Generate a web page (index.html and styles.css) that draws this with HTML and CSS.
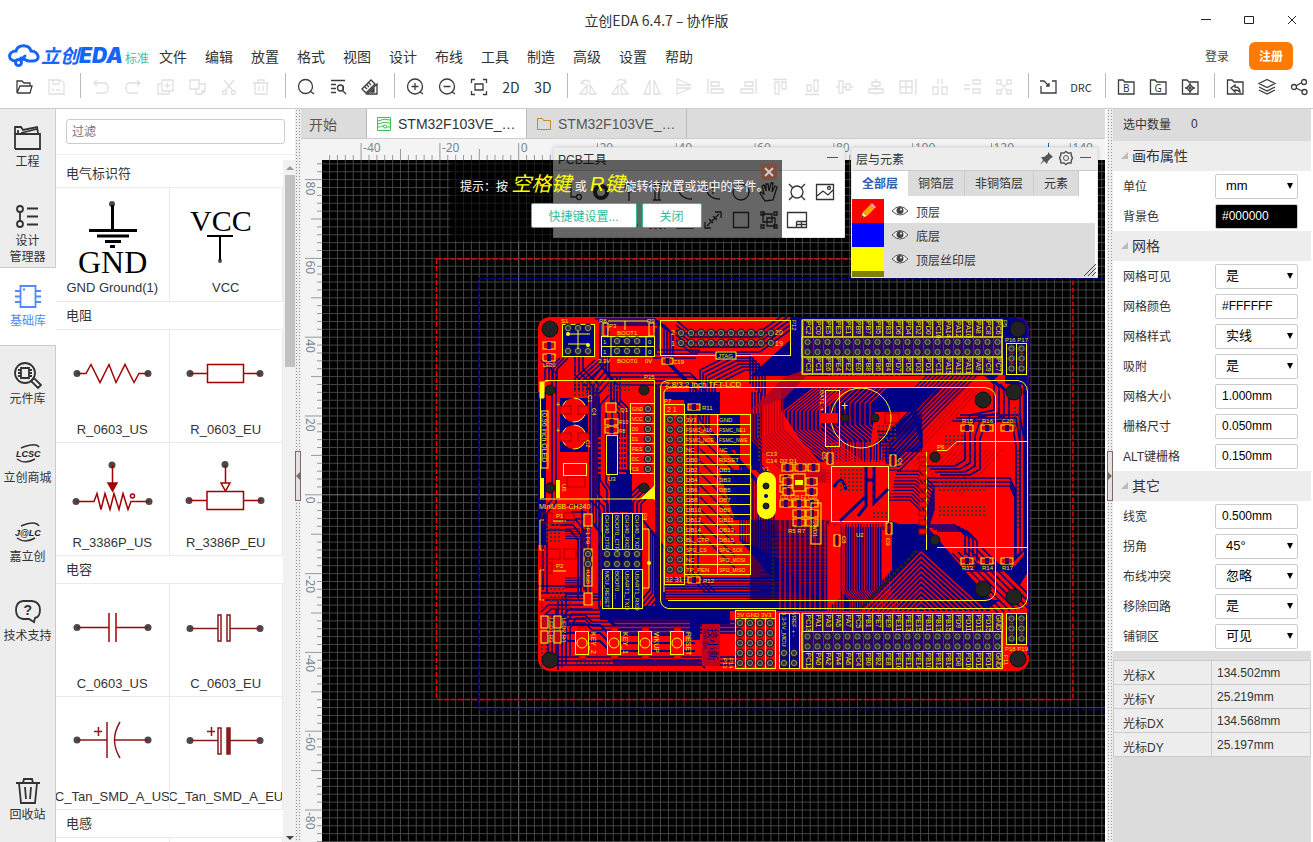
FILE: index.html
```html
<!DOCTYPE html>
<html lang="zh-CN">
<head>
<meta charset="utf-8">
<title>立创EDA 6.4.7 – 协作版</title>
<link rel="stylesheet" href="styles.css">
</head>
<body>
<div class="app">
<header class="titlebar">
  <h1 class="title">立创EDA 6.4.7 – 协作版</h1>
  <div class="window-buttons">
    <button aria-label="最小化"><svg width="14" height="14"><path d="M2 6.500h10" stroke-width="1"/></svg></button>
    <button aria-label="最大化"><svg width="14" height="14"><path d="M2.500 3.500h9v7h-9z" stroke-width="1"/></svg></button>
    <button aria-label="关闭"><svg width="14" height="14"><path d="M3 3l8 8M11 3l-8 8" stroke-width="1"/></svg></button>
  </div>
</header>
<div class="menubar">
  <a class="brand" href="#" aria-label="立创EDA">
    <svg width="32" height="24" viewBox="0 0 32 24" fill="none" stroke="#1765f6" stroke-width="3" stroke-linecap="round"><path d="M8 17C-1 17 0 7 8 7C10 0 21 0 23 7C31 7 33 17 25 17H20L13 14"/><circle cx="10.500" cy="18.500" r="3"/><path d="M13 16l4-4"/></svg>
    <span class="brand-name">立创<b>EDA</b></span>
  </a>
  <span class="edition">标准</span>
  <nav class="menu">
    <a href="#">文件</a><a href="#">编辑</a><a href="#">放置</a><a href="#">格式</a><a href="#">视图</a><a href="#">设计</a><a href="#">布线</a><a href="#">工具</a><a href="#">制造</a><a href="#">高级</a><a href="#">设置</a><a href="#">帮助</a>
  </nav>
  <a class="login" href="#">登录</a>
  <button class="register">注册</button>
</div>
<div class="toolbar">
  <button aria-label="打开"><svg viewBox="0 0 20 20"><path d="M3 16V4h5l2 2h6v3M3 16l3-7h12l-2 7H3"/></svg></button>
  <button aria-label="保存" disabled><svg viewBox="0 0 20 20"><path d="M3 3h11l4 3v11H3zM7 3v4h6V3M6 13h2M10 13h4"/></svg></button>
  <i class="sep"></i>
  <button aria-label="撤销" disabled><svg viewBox="0 0 20 20"><path d="M6 3L3 6l3 3M3 6h10q4 0 4 5t-4 5H5"/></svg></button>
  <button aria-label="重做" disabled><svg viewBox="0 0 20 20"><path d="M14 3l3 3-3 3M17 6H7q-4 0-4 5t4 5h8"/></svg></button>
  <button aria-label="添加" disabled><svg viewBox="0 0 20 20"><path d="M7 3h11v11H7zM7 7H3v10h11v-3M12.500 5.500v6M9.500 8.500h6"/></svg></button>
  <button aria-label="复制" disabled><svg viewBox="0 0 20 20"><path d="M3 3h9v9H3zM12 7h6v7l-3 3H9v-5M15 17v-3h3"/></svg></button>
  <button aria-label="剪切" disabled><svg viewBox="0 0 20 20"><path d="M5 3l9 11M15 3L6 14"/><circle cx="5.500" cy="15.500" r="2"/><circle cx="14.500" cy="15.500" r="2"/></svg></button>
  <button aria-label="删除" disabled><svg viewBox="0 0 20 20"><path d="M2 6h16M7 6V3h6v3M4 6v11h12V6M8 9v5M12 9v5"/></svg></button>
  <i class="sep"></i>
  <button aria-label="查找"><svg viewBox="0 0 20 20"><circle cx="9.500" cy="9.500" r="7"/><path d="M14 14l4 3"/></svg></button>
  <button aria-label="查找相似"><svg viewBox="0 0 20 20"><path d="M3 3.500h14M3 7.500h5M3 11.500h5M3 15.500h5"/><circle cx="12.500" cy="11" r="3"/><path d="M14 13l4 4M15 9v4"/></svg></button>
  <button aria-label="测量"><svg viewBox="0 0 20 20"><path d="M2 12l9-9 4 4-9 9zM5 10l2 2M7 8l2 2M9 6l2 2M17 7v10H7zM14 12v3h-3z"/></svg></button>
  <i class="sep"></i>
  <button aria-label="放大"><svg viewBox="0 0 20 20"><circle cx="10" cy="9.500" r="7.500"/><path d="M10 6v7M6.500 9.500h7M15 15l3 2"/></svg></button>
  <button aria-label="缩小"><svg viewBox="0 0 20 20"><circle cx="10" cy="9.500" r="7.500"/><path d="M6.500 9.500h7M15 15l3 2"/></svg></button>
  <button aria-label="适合窗口"><svg viewBox="0 0 20 20"><path d="M2.500 6V2.500H6M14 2.500h3.500V6M17.500 14v3.500H14M6 17.500H2.500V14M6 7h8v6H6z"/></svg></button>
  <button class="word">2D</button>
  <button class="word">3D</button>
  <i class="sep"></i>
  <button aria-label="左旋" disabled><svg viewBox="0 0 20 20"><path d="M9 8v9H2zM12 8v9h6zM5 3L3 6l4 1M3 6q4-5 9-1"/></svg></button>
  <button aria-label="右旋" disabled><svg viewBox="0 0 20 20"><path d="M8 8v9H2zM11 8v9h7zM15 2l1 4-4 1M16 6Q12 0 7 4"/></svg></button>
  <button aria-label="水平翻转" disabled><svg viewBox="0 0 20 20"><path d="M8 3v14H2zM12 3v14h6z"/></svg></button>
  <button aria-label="垂直翻转" disabled><svg viewBox="0 0 20 20"><path d="M3 8h14L3 2zM3 11h14L3 17z"/></svg></button>
  <button aria-label="左对齐" disabled><svg viewBox="0 0 20 20"><path d="M2 2v15M5 5h8v4H5zM5 12h12v4H5z"/></svg></button>
  <button aria-label="右对齐" disabled><svg viewBox="0 0 20 20"><path d="M18 2v15M7 5h8v4H7zM3 12h12v4H3z"/></svg></button>
  <button aria-label="顶对齐" disabled><svg viewBox="0 0 20 20"><path d="M3 2.500h14M5 5h4v12H5zM12 5h4v7h-4z"/></svg></button>
  <button aria-label="底对齐" disabled><svg viewBox="0 0 20 20"><path d="M3 17.500h14M5 8h4v6H5zM12 3h4v11h-4z"/></svg></button>
  <button aria-label="水平居中" disabled><svg viewBox="0 0 20 20"><path d="M2 10h3M9 10h3M16 10h3M5 4h4v12H5zM12 7h4v6h-4z"/></svg></button>
  <button aria-label="垂直居中" disabled><svg viewBox="0 0 20 20"><path d="M10 2v3M10 9v3M10 16v2M6 5h8v4H6zM3 12h14v4H3z"/></svg></button>
  <button aria-label="栅格对齐" disabled><svg viewBox="0 0 20 20"><path d="M2 4h12v12H2zM2 10h12M8 4v12M18 2v16"/></svg></button>
  <button aria-label="水平分布" disabled><svg viewBox="0 0 20 20"><path d="M8 2v5M12 2v5M3 10h5v7H3zM12 10h5v7h-5z"/></svg></button>
  <button aria-label="垂直分布" disabled><svg viewBox="0 0 20 20"><path d="M2 8h6M2 12h6M11 3h7v4h-7zM11 12h7v4h-7z"/></svg></button>
  <button aria-label="阵列" disabled><svg viewBox="0 0 20 20"><path d="M3 3h4v4H3zM13 3h4v4h-4zM3 13h4v4H3zM13 13h4v4h-4zM7 7l6 6M13 7l-6 6"/></svg></button>
  <i class="sep"></i>
  <button aria-label="导入变更"><svg viewBox="0 0 20 20"><path d="M2 9v7h15V4h-4M1 4h4l5 5M10 6v3H7"/></svg></button>
  <button class="word small">DRC</button>
  <i class="sep"></i>
  <button aria-label="BOM"><svg viewBox="0 0 20 20"><path d="M2.500 17V3H7l2 2h9v12z"/><text x="7" y="14.500">B</text></svg></button>
  <button aria-label="Gerber"><svg viewBox="0 0 20 20"><path d="M2.500 17V3H7l2 2h9v12z"/><text x="6.500" y="14.500">G</text></svg></button>
  <button aria-label="坐标文件"><svg viewBox="0 0 20 20"><path d="M2.500 17V3H7l2 2h9v12zM10 6v2M10 14v2M5 11h2M13 11h2"/><path d="M10 7.500l3.500 3.500-3.500 3.500L6.500 11z"/><circle cx="10" cy="11" r="1"/></svg></button>
  <i class="sep"></i>
  <button aria-label="回退"><svg viewBox="0 0 20 20"><path d="M2.500 17V3H7l2 2h9v12zM6 11l4-3v2q5 0 5 5-2-2-5-2v2z"/></svg></button>
  <button aria-label="图层"><svg viewBox="0 0 20 20"><path d="M10 2.500l8 4-8 4-8-4zM2 10l8 4 8-4M2 13l8 4 8-4"/></svg></button>
  <button aria-label="分享"><svg viewBox="0 0 20 20"><circle cx="5" cy="10" r="2.500"/><circle cx="15" cy="5" r="2.500"/><circle cx="15.500" cy="15" r="2.500"/><path d="M7 9l5-3M7 11l6 3"/></svg></button>
</div>

<main class="workspace">
<nav class="rail">
  <button><svg width="30" height="30" viewBox="0 0 30 30"><path d="M2 26V4h6l2 3 14-3 1 6M2 11h25v15H2M5 11V7M8 10l16-4"/></svg>工程</button>
  <button class="two"><svg width="30" height="30" viewBox="0 0 30 30"><circle cx="7" cy="7" r="3"/><circle cx="7" cy="22" r="3"/><path d="M7 10v9M14 6.500h11M14 14.500h11M14 22.500h11"/></svg><span>设计<br>管理器</span></button>
  <button class="active"><svg width="30" height="30" viewBox="0 0 30 30"><path d="M7.500 4h15v21h-15zM2 9h5M2 14.500h5M2 20h5M23 9h5M23 14.500h5M23 20h5M10 7.500h2"/></svg>基础库</button>
  <button><svg width="30" height="30" viewBox="0 0 30 30"><circle cx="12" cy="13" r="10"/><path d="M19 20l2-2 7 7-3 3-7-7zM8 8h8v10H8zM5 10h3M5 13h3M5 16h3M16 10h3M16 13h3M16 16h3"/></svg>元件库</button>
  <button><svg width="30" height="30" viewBox="0 0 30 30"><path class="swoosh" d="M8 9Q23 3 26 8M4 20Q12 26 22 20"/><text x="3" y="18" class="mark">LCSC</text></svg>立创商城</button>
  <button><svg width="30" height="30" viewBox="0 0 30 30"><path class="swoosh" d="M8 8Q22 2 26 8M4 20Q12 26 22 20"/><text x="2" y="18" class="mark">J@LC</text></svg>嘉立创</button>
  <button><svg width="30" height="30" viewBox="0 0 30 30"><path d="M10 4h9q8 1 8 9 0 7-5 8l-1 4-5-3h-6q-7-1-7-9 0-8 7-9z"/><text x="10.500" y="18" class="ask">?</text></svg>技术支持</button>
  <button class="last"><svg width="30" height="30" viewBox="0 0 30 30"><path d="M3 7h24M10 7l1-4h8l1 4M6 7l2 20h14l2-20M12 11l1 12M18 11l-1 12"/></svg>回收站</button>
</nav>
<section class="library">
  <div class="filter"><input type="text" placeholder="过滤" aria-label="过滤"></div>
  <div class="library-body">
  <div class="parts">
    <h2>电气标识符</h2>
    <div class="cells first">
      <figure><svg viewBox="0 0 113 90"><circle class="pin" cx="56" cy="16" r="3"/><path d="M56.500 17V42" stroke="#000" stroke-width="3"/><path d="M33 42.500h48M41 48h32M49 53.500h16M54 58.500h5" stroke="#000" stroke-width="3"/><text x="22" y="85" class="serif32">GND</text></svg><figcaption>GND Ground(1)</figcaption></figure>
      <figure><svg viewBox="0 0 113 90"><circle class="pin" cx="51" cy="73" r="2"/><path d="M38 48h26M51 48v24" stroke="#000" stroke-width="2"/><text x="21" y="43" class="serif30">VCC</text></svg><figcaption>VCC</figcaption></figure>
    </div>
    <h2>电阻</h2>
    <div class="cells">
      <figure><svg viewBox="0 0 113 90"><g class="pin"><circle cx="21" cy="43.500" r="3.500"/><circle cx="92" cy="43.500" r="3.500"/></g><path d="M21 43.500h9l5-9 9 18 9-18 7 18 9-18 9 18 5-9h9"/></svg><figcaption>R_0603_US</figcaption></figure>
      <figure><svg viewBox="0 0 113 90"><g class="pin"><circle cx="21" cy="43.500" r="3.500"/><circle cx="91" cy="43.500" r="3.500"/></g><path d="M21 43.500h17M38.500 34.500h36v18h-36zM74 43.500h17"/></svg><figcaption>R_0603_EU</figcaption></figure>
      <figure><svg viewBox="0 0 113 90"><g class="pin"><circle cx="20" cy="58.500" r="3.500"/><circle cx="93" cy="58.500" r="3.500"/><circle cx="56" cy="22" r="3.500"/></g><path d="M20 58.500h18l3-8 4 16 4-16 5 16 4-16 5 16 4-16 5 16 3-8h18M56.500 22v20"/><path d="M52 40h9l-4.500 8z" fill="#a00000"/><circle cx="76.500" cy="53" r="2" fill="none"/></svg><figcaption>R_3386P_US</figcaption></figure>
      <figure><svg viewBox="0 0 113 90"><g class="pin"><circle cx="20" cy="57.500" r="3.500"/><circle cx="92" cy="57.500" r="3.500"/><circle cx="56" cy="21.500" r="3.500"/></g><path d="M20 57.500h18M38 48.500h36.500v18H38zM74 57.500h18M56.500 22v18M52 40h9l-4.500 8z"/></svg><figcaption>R_3386P_EU</figcaption></figure>
    </div>
    <h2>电容</h2>
    <div class="cells">
      <figure><svg viewBox="0 0 113 90"><g class="pin"><circle cx="21" cy="43.500" r="3.500"/><circle cx="92" cy="43.500" r="3.500"/></g><path d="M21 43.500h32M53 29v29M60 29v29M60 43.500h32"/></svg><figcaption>C_0603_US</figcaption></figure>
      <figure><svg viewBox="0 0 113 90"><g class="pin"><circle cx="21" cy="44.500" r="3.500"/><circle cx="91" cy="44.500" r="3.500"/></g><path class="dull" d="M21 44.500h28M49 31h3v26h-3zM58 31h3v26h-3zM61 44.500h30"/></svg><figcaption>C_0603_EU</figcaption></figure>
      <figure><svg viewBox="0 0 113 90"><g class="pin"><circle cx="21" cy="43" r="3.500"/><circle cx="92" cy="43" r="3.500"/></g><path class="dull" d="M21 43h30M51 25v36M64 25q-11 18 0 36M58 43h34M38 34.500h8M42.500 30v9"/></svg><figcaption>C_Tan_SMD_A_US</figcaption></figure>
      <figure><svg viewBox="0 0 113 90"><g class="pin"><circle cx="21" cy="43.500" r="3.500"/><circle cx="91" cy="43.500" r="3.500"/></g><path class="dull" d="M21 43.500h28M49 31h3v26h-3zM61 43.500h30M38 34.500h8M42.500 30v9"/><path d="M58 31h3v26h-3z" class="dull" fill="#8b1a1a"/></svg><figcaption>C_Tan_SMD_A_EU</figcaption></figure>
    </div>
    <h2>电感</h2>
    <div class="cells"><figure></figure><figure></figure></div>
  </div>
  <div class="scrollbar"><span class="up"></span><span class="thumb"></span><span class="down"></span></div>
  </div>
</section>
<div class="splitter left"><button aria-label="折叠左侧面板"></button></div>

<section class="editor">
  <div class="tabs">
    <button class="tab start">开始</button>
    <button class="tab current"><svg width="16" height="16" viewBox="0 0 16 16" stroke="#3bc44b"><path d="M1.500 1.500h13v13h-13zM2 5q6-3 12-1M2 8q6-3 12-1M2 11q3 0 4-1h2M10 11h4"/><circle cx="9" cy="10.500" r="1.500"/></svg>STM32F103VE_…</button>
    <button class="tab"><svg width="16" height="16" viewBox="0 0 16 16" stroke="#c28a20"><path d="M1.500 13.500v-11h5l1 2h7v9z"/></svg>STM32F103VE_…</button>
  </div>
  <div class="canvas"><svg id="board" aria-label="PCB 画布"></svg></div>

  <section class="panel tools">
    <header><span>PCB工具</span><button class="min" aria-label="最小化"></button></header>
    <div class="tool-grid">
      <button aria-label="导线"><svg viewBox="0 0 24 24"><path d="M3 3h7v14h5"/><circle cx="18" cy="17" r="2.500"/></svg></button>
      <button aria-label="焊盘"><svg viewBox="0 0 24 24"><circle cx="12" cy="12" r="6" stroke-width="4"/></svg></button>
      <button aria-label="过孔"><svg viewBox="0 0 24 24"><circle cx="12" cy="8" r="4"/><path d="M12 12v9"/></svg></button>
      <button aria-label="文字"><svg viewBox="0 0 24 24"><path d="M5 7V4h14v3M10 4v16h4V4M8 20h8"/></svg></button>
      <button aria-label="圆弧"><svg viewBox="0 0 24 24"><path d="M5 5q0 14 14 14"/><path d="M5 5h15" stroke-dasharray="2 2"/></svg></button>
      <button aria-label="中心圆弧"><svg viewBox="0 0 24 24"><path d="M5 5q0 14 14 14"/><path d="M12 4v12" stroke-dasharray="2 2"/></svg></button>
      <button aria-label="圆"><svg viewBox="0 0 24 24"><circle cx="12" cy="12" r="8"/></svg></button>
      <button aria-label="移动"><svg viewBox="0 0 24 24"><path d="M8 21l-5-8 1-1 3 2-2-8 2-1 2 6V4h2l1 7 2-8h2l-1 9 3-6 2 1-4 13z"/></svg></button>
      <button aria-label="通孔"><svg viewBox="0 0 24 24"><circle cx="12" cy="12" r="6"/><path d="M4 4l4 4M20 4l-4 4M4 20l4-4M20 20l-4-4"/></svg></button>
      <button aria-label="图片"><svg viewBox="0 0 24 24"><path d="M3.500 4.500h17v15h-17zM4 16l6-5 5 4 5-5"/><circle cx="16" cy="8" r="1.500"/></svg></button>
      <button aria-label="尺寸"><svg viewBox="0 0 24 24"><path d="M3 4v6M21 4v6M3 7h18M6 5L3 7l3 2M18 5l3 2-3 2"/></svg></button>
      <button aria-label="原点"><svg viewBox="0 0 24 24"><path d="M20 3L4 20"/></svg></button>
      <button aria-label="量角器"><svg viewBox="0 0 24 24"><circle cx="6" cy="5" r="2"/><path d="M6 7v10h10"/><circle cx="18" cy="17" r="2"/></svg></button>
      <button aria-label="覆铜"><svg viewBox="0 0 24 24"><path d="M4 4h16v16H4z" stroke-dasharray="3 2"/></svg></button>
      <button aria-label="实心区"><svg viewBox="0 0 24 24"><path d="M4 4h16v16H4z"/></svg></button>
      <button aria-label="测量"><svg viewBox="0 0 24 24"><path d="M6 18L18 6M4 14v6h6M14 4h6v6M8 11l4 4M12 8l4 4"/></svg></button>
      <button aria-label="矩形"><svg viewBox="0 0 24 24"><path d="M4.500 4.500h15v15h-15z"/></svg></button>
      <button aria-label="组合"><svg viewBox="0 0 24 24"><path d="M6 6h9v8H6zM10 10h8v8h-8zM4 4h3v3H4zM17 4h3v3h-3zM4 17h3v3H4zM17 17h3v3h-3z"/></svg></button>
      <button aria-label="工作表"><svg viewBox="0 0 24 24"><path d="M2.500 4.500h19v15h-19zM11.500 13.500h10M11.500 13.500v6M16.500 13.500v6M11.500 16.500h10"/></svg></button>
    </div>
  </section>

  <section class="tip">
    <button class="close" aria-label="关闭提示"><svg width="14" height="14"><path d="M3 3l8 8M11 3l-8 8"/></svg></button>
    <p>提示：按 <em>空格键</em> 或 <em>R键</em>旋转待放置或选中的零件。</p>
    <div><button class="ghost wide">快捷键设置...</button><button class="ghost">关闭</button></div>
  </section>

  <section class="panel layers">
    <header><span>层与元素</span>
      <button aria-label="固定"><svg width="16" height="16" viewBox="0 0 16 16" fill="#555"><path d="M9 2l5 5-2 1-3 3-1 3-3-3-4 4 3-5-2-3 3 0 4-3z"/></svg></button>
      <button aria-label="设置"><svg width="16" height="16" viewBox="0 0 16 16" fill="none" stroke="#555"><path d="M8 1.500l2 1.500 3 0 .5 3 1 2-1 2-.5 3-3 0-2 1.500L6 13l-3 0-.5-3-1-2 1-2L3 3l3 0z" stroke-width="1.500"/><circle cx="8" cy="8" r="2.500"/></svg></button>
      <button class="min" aria-label="最小化"></button></header>
    <div class="layer-tabs"><button class="on">全部层</button><button>铜箔层</button><button>非铜箔层</button><button>元素</button></div>
    <ul>
      <li class="active"><span class="swatch red"><svg width="20" height="20" viewBox="0 0 20 20"><path d="M3 17l2-6 4 4z" fill="#ffe0a0"/><path d="M5 11l7-7 4 4-7 7z" fill="#f5a800"/><path d="M12 4l2-2 4 4-2 2z" fill="#f7a3a3"/><path d="M3 17l1-3 2 2z" fill="#333"/></svg></span><svg class="eye" viewBox="0 0 18 12"><path d="M1 6q8-9 16 0-8 8-16 0z" fill="#fff" stroke="#555"/><circle cx="9" cy="5.500" r="3.500" fill="#444"/><circle cx="10" cy="4.500" r="1" fill="#fff"/></svg>顶层</li>
      <li><span class="swatch blue"></span><svg class="eye" viewBox="0 0 18 12"><path d="M1 6q8-9 16 0-8 8-16 0z" fill="#fff" stroke="#555"/><circle cx="9" cy="5.500" r="3.500" fill="#444"/><circle cx="10" cy="4.500" r="1" fill="#fff"/></svg>底层</li>
      <li><span class="swatch yellow"></span><svg class="eye" viewBox="0 0 18 12"><path d="M1 6q8-9 16 0-8 8-16 0z" fill="#fff" stroke="#555"/><circle cx="9" cy="5.500" r="3.500" fill="#444"/><circle cx="10" cy="4.500" r="1" fill="#fff"/></svg>顶层丝印层</li>
      <li><span class="swatch olive"></span></li>
    </ul>
    <svg class="grip" width="14" height="14"><path d="M1 13L13 1M5 13l8-8M9 13l4-4" stroke="#444"/></svg>
  </section>
</section>

<div class="splitter right"><button aria-label="折叠右侧面板"></button></div>
<aside class="props">
  <p class="count"><span>选中数量</span><output>0</output></p>
  <h3>画布属性</h3>
  <div class="row"><label for="unit">单位</label><span class="pick"><select id="unit"><option>mm</option></select></span></div>
  <div class="row"><label for="bg">背景色</label><input id="bg" class="black" value="#000000"></div>
  <h3>网格</h3>
  <div class="row"><label for="gv">网格可见</label><span class="pick"><select id="gv"><option>是</option></select></span></div>
  <div class="row"><label for="gc">网格颜色</label><input id="gc" value="#FFFFFF"></div>
  <div class="row"><label for="gs">网格样式</label><span class="pick"><select id="gs"><option>实线</option></select></span></div>
  <div class="row"><label for="sn">吸附</label><span class="pick"><select id="sn"><option>是</option></select></span></div>
  <div class="row"><label for="sz">网格大小</label><input id="sz" value="1.000mm"></div>
  <div class="row"><label for="sd">栅格尺寸</label><input id="sd" value="0.050mm"></div>
  <div class="row"><label for="al">ALT键栅格</label><input id="al" value="0.150mm"></div>
  <h3>其它</h3>
  <div class="row"><label for="lw">线宽</label><input id="lw" value="0.500mm"></div>
  <div class="row"><label for="co">拐角</label><span class="pick"><select id="co"><option>45°</option></select></span></div>
  <div class="row"><label for="cf">布线冲突</label><span class="pick"><select id="cf"><option>忽略</option></select></span></div>
  <div class="row"><label for="lp">移除回路</label><span class="pick"><select id="lp"><option>是</option></select></span></div>
  <div class="row"><label for="cp">铺铜区</label><span class="pick"><select id="cp"><option>可见</option></select></span></div>
  <table>
    <tr><th>光标X</th><td>134.502mm</td></tr>
    <tr><th>光标Y</th><td>25.219mm</td></tr>
    <tr><th>光标DX</th><td>134.568mm</td></tr>
    <tr><th>光标DY</th><td>25.197mm</td></tr>
  </table>
</aside>
</main>
</div>
<script src="board.js"></script>
</body>
</html>
```
FILE: styles.css
```css
* { box-sizing: border-box; }
body, h1, h2, h3, p, ul, figure { margin: 0; padding: 0; }
body, button, input, select { font-family: "Liberation Sans", "Noto Sans CJK SC", sans-serif; color: #333; }
body { font-size: 12px; background: #fff; }
button { border: 0; padding: 0; background: none; font-size: 12px; }
a { color: inherit; text-decoration: none; }
.app { display: flex; flex-direction: column; height: 100vh; overflow: hidden; }

.titlebar { flex: none; height: 40px; display: flex; align-items: center; justify-content: flex-end; }
.title { flex: 1; text-align: center; font: 14px/18px "Noto Sans CJK SC", sans-serif; margin-right: -128px; }
.window-buttons { display: flex; width: 128px; }
.window-buttons button { width: 43px; height: 24px; }
.window-buttons svg { fill: none; stroke: #222; display: block; margin: auto; }

.menubar { flex: none; height: 33px; display: flex; align-items: center; padding: 0 20px 2px 8px; }
.brand { display: flex; align-items: center; gap: 1px; width: 117px; }
.brand-name { font: italic bold 19px "Noto Sans CJK SC", sans-serif; color: #1765f6; white-space: nowrap; line-height: 24px; }
.brand-name b { font: italic 900 21px/24px Inter, sans-serif; }
.edition { color: #3ec1a3; width: 34px; padding-top: 4px; }
.menu { display: flex; gap: 18px; flex: 1; font-size: 14px; }
.login { color: #444; margin-right: 20px; }
.register { width: 44px; height: 28px; border-radius: 6px; background: #ff7a00; color: #fff; font-weight: bold; }

.toolbar { flex: none; display: flex; padding: 0 0 7px 8px; border-bottom: 1px solid #ccc; height: 36px; overflow: hidden; }
.toolbar button { flex: none; width: 32px; height: 28px; display: flex; align-items: center; justify-content: center; }
.toolbar svg { width: 20px; height: 20px; fill: none; stroke: #3c3c3c; stroke-width: 1.300; }
.toolbar button:disabled svg { stroke: #e0e0e0; }
.toolbar text { font: 10px "Noto Sans", sans-serif; fill: #333; stroke: none; }
.toolbar .word { font: 14px/26px "Noto Sans CJK SC", sans-serif; }
.toolbar .small { font-size: 11px; }
.sep { flex: none; width: 13px; height: 25px; }
.sep::before { content: ""; display: block; margin-left: 8px; width: 1px; height: 25px; background: #bbb; }

.workspace { flex: 1; min-height: 0; display: flex; }
.rail { flex: none; width: 56px; display: flex; flex-direction: column; background: #ededed; border-right: 1px solid #ccc; }
.rail button { flex: none; height: 79px; padding-top: 14px; line-height: 18px; width: 55px; white-space: nowrap; display: flex; flex-direction: column; align-items: center; }
.rail button.two { line-height: 16px; }
.rail button.two svg { margin-bottom: 1px; }
.rail svg { flex: none; fill: none; stroke: #333; stroke-width: 1.800; }
.rail .active { background: #fff; width: 56px; color: #5588ff; border: solid #ccc; border-width: 1px 0; }
.rail .active svg { stroke: #5588ff; }
.rail .last { margin-top: auto; margin-bottom: 1px; }
.rail .swoosh { stroke-width: 1.500; }
.rail .mark { font: italic bold 9px "Liberation Sans", sans-serif; fill: #222; stroke: none; }
.rail .ask { font: bold 14px "Liberation Sans", sans-serif; fill: #333; stroke: none; }

.library { flex: none; width: 239px; display: flex; flex-direction: column; }
.filter { height: 46px; padding: 10px 10px 0; border-bottom: 1px solid #eee; }
.filter input { width: 100%; height: 25px; border: 1px solid #ccc; border-radius: 3px; padding: 0 5px; font-size: 12px; }
.library-body { flex: 1; min-height: 0; display: flex; padding-top: 5px; }
.parts { flex: 1; overflow: hidden; }
.parts h2 { font-size: 13px; font-weight: normal; height: 28px; line-height: 28px; padding-left: 10px; border-bottom: 1px solid #eaeaea; }
.cells { display: grid; grid-template-columns: 1fr 1fr; }
.cells figure { height: 113px; border: solid #eaeaea; border-width: 0 1px 1px 0; overflow: hidden; display: flex; flex-direction: column; align-items: center; }
.cells.first figure { height: 114px; }
.cells svg { flex: none; width: 113px; height: 90px; fill: none; stroke: #a00000; stroke-width: 1.500; }
.cells .dull { stroke: #8b1a1a; }
.cells .pin { fill: #4a4a4a; stroke: none; }
.cells text { fill: #000; stroke: none; }
.serif32 { font: 32px "Liberation Serif", serif; }
.serif30 { font: 30px "Liberation Serif", serif; }
figcaption { font-size: 13px; line-height: 20px; white-space: nowrap; }
.scrollbar { flex: none; width: 12px; background: #f1f1f1; display: flex; flex-direction: column; align-items: flex-end; }
.scrollbar .up { margin: 6px 1px 5px; border: solid transparent; border-width: 0 4px 4px; border-bottom-color: #999; }
.scrollbar .thumb { width: 10px; height: 192px; background: #c1c1c1; }
.scrollbar .down { margin: auto 1px 2px; border: solid transparent; border-width: 4px 4px 0; border-top-color: #444; }
.splitter { flex: none; width: 6px; background-color: #ededed; background-image: radial-gradient(#999 30%, transparent 35%); background-size: 3px 3px; display: flex; align-items: center; }
.splitter button { width: 6px; height: 50px; border: 1px solid #7a6a6a; background: #e6e0e0; display: flex; align-items: center; }
.splitter button::before { content: ""; border: solid transparent; border-width: 4px 4px 4px 0; border-right-color: #7a6a6a; }
.splitter.right button::before { border-width: 4px 0 4px 4px; border-left-color: #7a6a6a; }
.splitter.right { margin-left: 2px; }

.editor { flex: 1; min-width: 0; display: flex; flex-direction: column; position: relative; overflow: hidden; }
.tabs { flex: none; display: flex; height: 30px; background: #dcdcdc; border-bottom: 1px solid #ccc; }
.tab { width: 160px; height: 29px; font-size: 14px; color: #555; display: flex; align-items: center; gap: 6px; padding-left: 9px; border-right: 1px solid #bbb; }
.tab.start { width: 66px; padding-left: 8px; }
.tab.current { background: #fff; color: #333; }
.tab svg { fill: none; }
.canvas { flex: 1; min-height: 0; background: #f4f4f4; }
.canvas svg { display: block; width: 100%; height: 100%; }
.ruler-label { font: 12px "Noto Sans", sans-serif; fill: #778899; }
.silk { font-family: "Liberation Sans", sans-serif; fill: #eeee00; }

.panel { position: absolute; background: #fff; border: 1px solid #e4e4e4; border-radius: 3px 3px 0 0; box-shadow: 0 0 4px rgba(0,0,0,.2); }
.panel header { height: 23px; background: #ededed; border-bottom: 1px solid #ccc; display: flex; align-items: center; gap: 3px; padding: 0 4px 2px; }
.panel header span { flex: 1; }
.panel header button { display: flex; width: 16px; height: 16px; }
.panel header .min::before { content: ""; width: 11px; height: 1px; margin: 7px auto; background: #555; }
.tools { left: 252px; top: 38px; width: 292px; height: 91px; }
.tool-grid { display: grid; grid-template-columns: repeat(10, 28px); padding: 8px 0 0 5px; }
.tool-grid button { height: 28px; }
.tool-grid svg { width: 24px; height: 24px; fill: none; stroke: #333; stroke-width: 1.300; }
.tip { position: absolute; left: 149px; top: 51px; width: 332px; height: 81px; background: rgba(0,0,0,.6); color: #fff; text-align: center; }
.tip p { margin-top: 9px; height: 34px; line-height: 30px; white-space: nowrap; text-align: left; padding-left: 10px; }
.tip em { font-size: 20px; color: #ff0; }
.tip div { display: flex; justify-content: center; gap: 5px; }
.tip .close { position: absolute; right: 5px; top: 4px; width: 16px; height: 16px; border-radius: 3px; background: #814e3d; display: flex; align-items: center; justify-content: center; }
.tip .close svg { stroke: #ccc; stroke-width: 2; }
.ghost { width: 60px; height: 25px; border: 1px solid #2fbd9d; border-radius: 2px; background: #fff; color: #2fbd9d; }
.ghost.wide { width: 106px; }
.layers { right: 7px; top: 38px; width: 247px; height: 131px; overflow: hidden; }
.layer-tabs { display: flex; height: 25px; }
.layer-tabs button { background: #dcdcdc; padding: 0 10px 2px; border-right: 1px solid #ccc; }
.layer-tabs .on { background: #fff; color: #2f5fb3; font-weight: bold; border: 0; }
.layers ul { list-style: none; padding-top: 3px; }
.layers li { display: flex; align-items: center; height: 24px; margin-right: 2px; background: #dcdcdc; }
.layers li.active { background: #fff; }
.swatch { width: 32px; height: 24px; margin-right: 7px; display: flex; align-items: center; justify-content: center; }
.red { background: #f00; } .blue { background: #00f; } .yellow { background: #ff0; } .olive { background: #808000; }
.eye { width: 18px; height: 12px; margin-right: 7px; }
.grip { position: absolute; right: 0; bottom: 0; }

.props { flex: none; width: 198px; margin-right: 2px; background: #dcdcdc; }
.count { height: 32px; line-height: 32px; padding-left: 10px; display: flex; gap: 20px; }
.count output { line-height: 30px; }
.props h3 { height: 30px; background: #ededed; font-size: 14px; font-weight: normal; display: flex; align-items: center; gap: 4px; padding: 0 0 2px 8px; }
.props h3::before { content: ""; border: solid transparent; border-width: 0 0 7px 7px; border-bottom-color: #bbb; }
.row { height: 30px; background: #fff; display: flex; align-items: center; padding: 0 13px 0 10px; }
.row label { flex: 1; padding-bottom: 2px; }
.row input, .row select { width: 83px; height: 25px; border: 1px solid #ccc; border-radius: 2px; background: #fff; color: #000; font-size: 12px; padding: 0 6px; }
.row select { appearance: none; font-size: 13px; padding: 0 10px 2px; }
.row .black { background: #000; color: #fff; }
.pick { position: relative; display: flex; }
.pick::after { content: ""; position: absolute; right: 5px; top: 9px; border: solid transparent; border-width: 6px 3px 0; border-top-color: #000; }
.props table { width: 100%; margin-top: 9px; border-collapse: collapse; background: #ededed; }
.props th, .props td { height: 24px; padding: 0 0 0 5px; border: 1px solid #ccc; text-align: left; font-weight: normal; }
.props th { width: 98px; padding: 3px 0 0 9px; }
```
FILE: board.js
```js
const NS = "http://www.w3.org/2000/svg";
const RED = "#ff0000", NAVY = "#000084", YEL = "#ffff00";
const board = document.getElementById("board");
const RIGHT = 301 + board.clientWidth, BOTTOM = 139 + board.clientHeight;
const out = [];
const add = s => out.push(s);
const rect = (x, y, w, h, fill, stroke, sw, extra) =>
  add(`<rect x="${x}" y="${y}" width="${w}" height="${h}" fill="${fill || "none"}" stroke="${stroke || "none"}" stroke-width="${sw || 1}" ${extra || ""}/>`);
const path = (d, stroke, sw, fill, extra) =>
  add(`<path d="${d}" fill="${fill || "none"}" stroke="${stroke || "none"}" stroke-width="${sw || 1}" ${extra || ""}/>`);
const dot = (x, y, r, fill, stroke) => add(`<circle cx="${x}" cy="${y}" r="${r}" fill="${fill}" stroke="${stroke || "none"}"/>`);
const label = (x, y, s, size, rot) =>
  add(`<text class="silk" font-size="${size || 7}" ${rot ? `transform="translate(${x} ${y}) rotate(${rot})"` : `x="${x}" y="${y}"`}>${s}</text>`);
const pad = (x, y) => { dot(x, y, 4.4, "#222"); dot(x, y, 2.6, "#333", "#8a8a8a"); };
const hole = (x, y, r) => dot(x, y, r, "#222", "#111");
/* a group of parallel traces, each shifted by (dx, dy) from the one before */
const bundle = (pts, n, dx, dy, color, w) => {
  for (let i = 0; i < n; i++)
    path("M" + pts.map(p => (p[0] + i * dx) + " " + (p[1] + i * dy)).join("L"), color || NAVY, w || 1.6);
};
const vias = (x, y, cols, rows, step) => {
  for (let i = 0; i < cols; i++) for (let j = 0; j < rows; j++)
    rect(x + i * step, y + j * step, 2, 2, "#4a3030");
};
const chip = (x, y, w, h) => { rect(x, y, w, h, "#e00000", YEL); rect(x + w / 3, y, w / 3, h, "#300060"); };

/* canvas background and grid */
const STEP = 7.88, X0 = 518.7, Y0 = 494.8;
rect(322, 160, RIGHT, BOTTOM, "#000");
for (let i = -24; X0 + i * STEP < RIGHT; i++) { const x = X0 + i * STEP; path(`M${x} 160V${BOTTOM}`, i === 0 ? "#777" : "#444", 1); }
for (let i = -42; Y0 + i * STEP < BOTTOM; i++) { const y = Y0 + i * STEP; path(`M322 ${y}H${RIGHT}`, i === 0 ? "#777" : "#444", 1); }
path("M436.500 259H1073V699.500H436.500Z", "#ee0000", 1.5, "", 'stroke-dasharray="5 2"');
path(`M${RIGHT} 278.500H479V709.500H${RIGHT}`, "#000090", 1.5, "", 'stroke-dasharray="5 2"');

/* copper */
add('<defs><clipPath id="edge"><rect x="538" y="317" width="491" height="354" rx="12"/></clipPath></defs><g clip-path="url(#edge)">');
rect(538, 317, 491, 354, RED);
path("M790 317H1029V384H1002L985 376H750L790 340Z", "", 0, NAVY);
path("M781 388H940L922 410V452H905L895 462H820L800 440L781 410Z", "", 0, NAVY);
path("M664 392H720V414H760V470H752V415H684V400H664Z", "", 0, NAVY);
path("M655 600H1000L985 611H730V640H690V620H600V606H655Z", "", 0, NAVY);
path("M750 520H830V600H750Z", "", 0, "#500040");
path("M832 524H925L990 600V611H832Z", "", 0, NAVY);
path("M719 414H740V470L735 450H719ZM719 470H751V520L735 520Z", "", 0, NAVY);
path("M538 470H546V545H538ZM610 470H632V512H610ZM560 398H588V452H560Z", "", 0, NAVY);
rect(562, 324, 33, 32, NAVY);
rect(601, 338, 54, 18, NAVY);
rect(602, 513, 40, 96, NAVY);
rect(700, 624, 35, 45, RED);
rect(538, 392, 8, 105, NAVY);

/* traces on the left side */
bundle([[558, 670], [558, 600], [600, 600], [600, 510], [590, 500], [590, 390], [575, 375], [575, 355]], 3, 4, -3);
bundle([[600, 319], [600, 365], [608, 373], [690, 373], [700, 383], [700, 420]], 4, 3, 4);
bundle([[604, 365], [590, 382], [590, 520], [599, 530], [599, 608], [612, 621], [735, 621]], 4, 3, 4);
bundle([[545, 615], [585, 615], [592, 622], [735, 622]], 3, 0, 4);
bundle([[595, 319], [655, 319], [664, 328], [664, 360], [690, 386], [690, 410]], 4, 3, 2);
bundle([[541, 360], [552, 370], [552, 500], [543, 510], [543, 590]], 2, 4, 3);
bundle([[609, 395], [600, 405], [600, 480], [607, 490], [607, 512]], 3, 6, 3);
bundle([[541, 612], [548, 605], [590, 605]], 2, 3, 4);
bundle([[548, 618], [548, 665], [735, 665]], 3, 4, -4);
bundle([[600, 610], [568, 610], [562, 620], [562, 648]], 3, 4, 4);
bundle([[614, 652], [614, 660], [700, 660], [705, 665]], 2, 0, 3);
bundle([[575, 519], [590, 519], [590, 600], [545, 600]], 3, -4, -7);
bundle([[643, 520], [650, 530], [650, 590], [640, 602]], 7, 2.4, 3);
bundle([[656, 385], [656, 600], [664, 608]], 3, 2, 1);
bundle([[688, 415], [688, 574], [705, 592], [760, 592]], 3, 5, 0);
bundle([[676, 340], [690, 352], [760, 352], [790, 330]], 5, 0, -5);
bundle([[700, 384], [700, 370], [730, 355], [750, 355], [750, 384]], 6, 3, 3);
bundle([[556, 358], [545, 369], [545, 380]], 4, 4, 0);
bundle([[595, 360], [575, 378], [575, 390]], 4, 4, 1);
bundle([[620, 376], [620, 400], [628, 408], [628, 480]], 4, -3, 2);
bundle([[658, 324], [658, 350], [700, 350]], 3, -2, 4);
bundle([[640, 485], [625, 500], [625, 512]], 5, 4, 1);
bundle([[548, 530], [570, 530], [578, 540], [578, 600]], 3, 3, -5);
bundle([[560, 625], [600, 625], [610, 635], [695, 635]], 3, 0, 8, NAVY, 2);
bundle([[663, 608], [830, 608]], 12, 0, -2.7, NAVY, 1.5);
/* display rows to the processor */
bundle([[700, 420], [740, 460], [740, 540], [780, 560], [830, 560]], 14, 2.6, 3, NAVY, 1.4);
bundle([[700, 425], [735, 460]], 10, 0, 12, NAVY, 1.4);
bundle([[752, 392], [752, 465], [762, 475]], 4, 3, 0);
bundle([[760, 532], [830, 532]], 14, 0, 4.5, "#000084", 1);
bundle([[780, 520], [780, 610]], 11, 5, 0, RED, 1.2);
/* fan-out above the processor */
bundle([[830, 375], [784, 411], [784, 430], [826, 462], [826, 480]], 10, 4, 0, RED, 1.3);
bundle([[785, 377], [752, 410], [752, 440], [794, 482], [830, 482]], 12, 2.8, -1, "#b00020", 1.2);
bundle([[850, 375], [820, 403], [820, 425], [838, 440], [838, 466]], 11, 5, 0, RED, 1.1);
bundle([[885, 446], [950, 374]], 26, 3, 2, "#d00010", 1.2);
bundle([[832, 442], [832, 466]], 18, 3.1, 0, RED, 1.2);
path("M875 412H911L870 447Z", "", 0, RED);
path("M920 452L1000 374L1015 378L1020 450H920Z", "", 0, RED);
bundle([[888, 470], [900, 470], [922, 448], [922, 430], [980, 372]], 12, -1, -3.5, NAVY, 1.4);
bundle([[888, 500], [910, 500], [925, 515], [925, 540]], 10, 1, -3.2, NAVY, 1.3);
/* processor fan-out below */
bundle([[828, 524], [828, 611]], 6, 3, 0, RED, 1.4);
bundle([[842, 524], [842, 590], [850, 600], [850, 611]], 20, 2.5, 0, "#d0001c", 1.1);
path("M828 526H840V598L828 608Z", "", 0, RED);
path("M882 530H892V570L882 580Z", "", 0, RED);
bundle([[888, 520], [915, 547], [862, 608]], 10, 2.8, 1, NAVY, 1.1);
bundle([[862, 612], [921, 552], [990, 615]], 14, 0, 5, RED, 1.5);
/* right side */
bundle([[985, 375], [994, 384], [994, 410], [970, 415], [965, 430], [965, 460], [955, 466], [925, 466]], 4, 5, 3);
bundle([[960, 415], [1020, 415], [1024, 440], [1024, 550], [1010, 565], [965, 565]], 3, -4, 3);
bundle([[925, 478], [1010, 478], [1015, 490], [1015, 550]], 3, 0, 4);
bundle([[925, 525], [955, 525], [965, 535], [965, 555]], 4, 4, 2);
bundle([[940, 555], [998, 613]], 8, 6, -1, NAVY, 1.6);
bundle([[1010, 378], [1020, 385], [1020, 450]], 2, 4, 0);
path("M1029 330V570L1020 585L1005 570H975V566H1015L1024 555V384H1005V330Z", "", 0, NAVY);

vias(574, 382, 7, 4, 4); vias(608, 381, 6, 3, 4); vias(945, 435, 5, 3, 4); vias(939, 481, 12, 3, 4);
vias(939, 506, 12, 3, 4); vias(1014, 407, 2, 6, 4); vias(844, 468, 6, 5, 4); vias(835, 510, 12, 2, 4);
vias(546, 524, 4, 5, 4); vias(550, 588, 4, 4, 4); vias(576, 662, 9, 1, 4); vias(541, 640, 2, 7, 4);
vias(878, 425, 5, 4, 4); vias(1017, 450, 1, 20, 4); vias(758, 415, 1, 12, 4);
for (let i = 0; i < 16; i++) { dot(773, 540 + i * 4, 1.6, "#222"); dot(862 + i * 3.6, 606 - i * 3.6, 2, "#222"); }
add("</g>");
path("M1017 318Q1028 318 1028 330V655", "#300084", 2);

[[550, 329], [1018, 329], [550, 660], [1018, 659], [1014, 392], [983, 400], [1014, 597], [983, 589]].forEach(p => hole(p[0], p[1], 8));
[[550, 390], [644, 390], [550, 488], [644, 488], [935, 457], [935, 540]].forEach(p => hole(p[0], p[1], 5));

/* switch, boot jumpers and debug port */
rect(562.5, 324.5, 32, 32, "none", YEL);
[568, 578, 588].forEach(x => { pad(x, 328); pad(x, 351); });
path("M568 334H590M568 344H588M578 331V349", YEL); dot(568, 334, 2, YEL); dot(588, 345, 2, YEL);
label(561, 323, "S1", 6); label(599, 323, "R8", 6); label(647, 323, "R9", 6); label(609, 328, "P3", 6);
rect(603, 323, 5, 13, "none", YEL); rect(649, 323, 5, 13, "none", YEL); path("M608 321H648M625 321V330", YEL);
rect(601.5, 336.5, 53, 20, "none", YEL); path("M601 346.500H655M611 337V356M646 337V356", YEL);
[617, 627, 637].forEach(x => { pad(x, 341); pad(x, 351); });
label(617, 335, "BOOT1", 6); label(617, 363, "BOOT0", 6); label(598, 363, "3.3V", 6); label(645, 363, "0V", 6);
label(603, 344, "1", 6); label(603, 354, "1", 6); label(648, 344, "0", 6); label(648, 354, "0", 6);
rect(660.5, 320.5, 130, 35, "none", YEL);
for (let i = 0; i < 10; i++) { pad(681 + i * 10, 333); pad(681 + i * 10, 343); }
label(671, 335, "2"); label(671, 346, "1"); label(775, 335, "20"); label(775, 346, "19");
rect(716, 352, 20, 7, NAVY, YEL); label(718, 358, "JTAG", 6);
chip(662, 358, 11, 6); label(673, 364, "C19", 6);

/* display outlines */
path("M545 380.500H654.500V500M540.500 499V390Q541 381 549 380.500M540 499H640Q652 496 655 485", YEL);
path("M540 398V382H544V398Z", YEL, 1, YEL);
label(644, 379, "P15", 6);
path("M660.500 600V388Q661 380 670 380.500H1018Q1027 382 1027.500 392V598Q1026 608 1016 608.500H668Q661 607 660.500 600Z", YEL);
path("M664 592V392Q666 387 672 387.500H985Q995 389 995.500 397V592Q994 600 985 600.500H668", YEL);
label(665, 387, "2.8/3.2 inch TFT-LCD", 8);
rect(541, 411, 7, 57, "none", YEL); label(542, 413, "0.96 inch OLED", 7, 90);
["GND", "VCC", "D0", "D1", "RES", "DC", "CS"].forEach((t, i) => {
  rect(630.5, 403.5 + i * 10, 24, 10, "none", YEL); label(632, 411 + i * 10, t, 5); pad(648, 409 + i * 10);
});
rect(664.5, 404.5, 20, 10, "none", YEL); label(667, 412, "2  1"); label(664, 403, "P7", 6);
chip(688, 404, 12, 6); label(702, 410, "R11", 6);
const rows = [["3V3", "GND"], ["FSMC_A16", "FSMC_NE1"], ["FSMC_NOE", "FSMC_NWE"], ["NC", "NC"], ["DB0", "RESET"], ["DB2", "DB1"], ["DB4", "DB3"], ["DB6", "DB5"], ["DB8", "DB7"], ["DB10", "DB9"], ["DB12", "DB11"], ["DB14", "DB13"], ["BL_CTR", "DB15"], ["SPI2_CS", "SPI2_SCK"], ["NC", "SPI2_MOSI"], ["TP_PEN", "SPI2_MISO"]];
rows.forEach((r, i) => {
  const y = 414.5 + i * 10;
  rect(684.5, y, 33, 10, "none", YEL); rect(717.5, y, 33, 10, "none", YEL);
  r.forEach((t, k) => label(k ? 719 : 686, y + 7.5, t, t.length > 6 ? 5 : 6));
  pad(670, y + 5); pad(680, y + 5);
});
rect(664.5, 414.5, 20, 170, "none", YEL); label(665, 582, "32 31", 7);
chip(688, 577, 12, 6); label(703, 583, "R12", 6);

/* power section */
[[574, 410], [574, 437]].forEach(p => { add(`<circle cx="${p[0]}" cy="${p[1]}" r="12" fill="${RED}" stroke="${YEL}" stroke-dasharray="20 8"/>`); rect(p[0] - 14, p[1] - 4, 11, 8, RED, "#a00000"); rect(p[0] + 4, p[1] - 4, 11, 8, RED, "#a00000"); });
label(588, 395, "C1", 6, 90); label(592, 408, "C4", 6, 90); label(556, 407, "+"); label(556, 433, "+"); label(586, 440, "C2", 6, 90);
rect(563.5, 463.5, 23, 12, RED, YEL); label(562, 484, "U5", 6, 90); rect(567, 477, 18, 10, RED, "#a00000");
rect(606.5, 435.5, 11, 39, NAVY, YEL); label(608, 481, "U3", 6);
for (let i = 0; i < 8; i++) { rect(598, 437 + i * 5, 7, 2, RED); rect(619, 437 + i * 5, 7, 2, RED); }
rect(606, 403, 10, 9, RED, YEL); label(620, 412, "Q1", 6); chip(605, 419, 13, 6); chip(605, 427, 13, 6); label(619, 424, "R10", 5); label(619, 433, "R8", 5);
[[543, 342], [543, 354]].forEach(p => chip(p[0], p[1], 12, 7)); label(543, 367, "LED0", 5);
rect(540, 478, 4, 20, YEL); rect(556, 480, 4, 18, YEL); path("M640 499L655 485V499Z", "", 0, YEL);

/* USB and serial header */
label(539, 509, "MiniUSB-CH340", 7); label(556, 518, "P1", 6); label(556, 568, "P2", 6);
path("M544 520H540V550H544M544 570H540V600H544M553 521H566M553 571H566", YEL);
[[542, 513, 10], [564, 513, 10], [542, 549, 18], [542, 563, 10], [564, 549, 12], [542, 598, 28]].forEach(r => rect(r[0], r[1], r[2], 10, "none", "#a00000"));
bundle([[565, 529], [580, 529]], 5, 0, 2.4, NAVY, 1); bundle([[565, 578], [580, 578]], 5, 0, 2.4, NAVY, 1);
rect(584, 514, 8, 12, RED, YEL); rect(584, 549, 8, 37, "none", YEL); pad(588, 554); pad(588, 564); label(586, 528, "F1 P9", 6, 90); label(586, 570, "IUSB", 6, 90); rect(584, 593, 8, 12, RED, YEL);
[0, 1, 2, 3].forEach(i => {
  rect(602.5 + i * 10, 513.5, 10, 36, "none", YEL); rect(602.5 + i * 10, 569.5, 10, 39, "none", YEL);
  pad(607 + i * 10, 554); pad(607 + i * 10, 564);
  label(605 + i * 10, 515, ["CH340_DTR", "BOOT0_CTR", "CH340_RXD", "CH340_TXD"][i], 6, 90);
  label(605 + i * 10, 571, ["MCU_RESET", "BOOT0 ....", "USART1_TXD", "USART1_RXD"][i], 6, 90);
});
path("M642 529H649V588H642", YEL); dot(649, 563, 2, YEL); label(643, 513, "P4", 6, 90);

/* crystal, memory and passives */
rect(757, 472, 19, 47, YEL, "none", 0, 'rx="9"'); hole(766, 486, 3); hole(766, 506, 3); dot(766, 496, 2, NAVY); label(762, 471, "Y1", 6);
[[780, 475], [780, 500], [793, 500], [806, 500], [793, 510], [806, 510], [793, 519], [806, 519], [780, 485]].forEach(p => chip(p[0], p[1], 12, 7));
label(766, 456, "C13", 6); label(766, 463, "C14", 6); label(780, 463, "D2  D1", 6); label(780, 499, "C11 C15  F2 C10", 5); label(788, 533, "R5 R7", 6);
[[782, 464], [795, 464], [808, 464], [783, 478], [806, 478], [783, 488], [806, 488]].forEach(p => chip(p[0], p[1], 11, 7));
rect(793, 474, 12, 17, "#c00000", YEL); rect(795, 480, 8, 5, YEL); rect(811, 503, 10, 41, "none", YEL); label(813, 520, "SWD1", 6, 90);
rect(831.5, 466.5, 57, 55, RED, "#ffff66");
path("M866 467V506L858 516M874 467V503L888 489M866 480H874M840 521L866 496M834 487Q842 472 846 490", NAVY, 3);
vias(840, 469, 6, 6, 4); vias(873, 512, 4, 2, 4); label(856, 537, "U2", 6);
for (let i = 0; i < 18; i++) { rect(832 + i * 3, 460, 1.5, 6, RED); rect(832 + i * 3, 522, 1.5, 5, RED); rect(826, 468 + i * 3, 5, 1.5, RED); rect(889, 468 + i * 3, 5, 1.5, RED); }
chip(827, 453, 6, 11); chip(890, 455, 6, 11); chip(834, 535, 6, 11); chip(886, 523, 6, 11);
label(822, 452, "C5", 6, 90); label(898, 458, "C6", 6, 90); label(842, 536, "C8", 6, 90); label(886, 538, "C9", 6, 90);
add(`<circle cx="861" cy="418" r="30" fill="none" stroke="${YEL}"/>`);
rect(825.5, 390.5, 14, 56, "none", YEL); rect(820, 413, 18, 10, RED); rect(885, 413, 14, 10, "none", "#a00000");
label(820, 390, "BAT1", 6, 90); label(841, 410, "+", 12); label(820, 412, "+"); hole(845, 418, 4); hole(875, 418, 4);

/* card socket */
label(937, 449, "P6", 6);
path("M937 450.500H947L957 441.500H1027M926.500 452V550M937 547.500H1027", YEL);
for (let i = 0; i < 9; i++) rect(919, 457 + i * 9, 7, 5, RED, "#a00000");
[[961, 425, "R15"], [981, 425, "R16"], [1001, 425, "C20"], [961, 558, "R13"], [981, 558, "R14"], [1001, 558, "R17"]].forEach((c, i) => { chip(c[0], c[1], 12, 6); label(c[0] + 1, i < 3 ? c[1] - 2 : c[1] + 12, c[2], 6); });

/* edge connectors */
const topA = ["PC2", "PC0", "PE5", "PE3", "PE1", "PB9", "PB7", "PB5", "PB3", "PD6", "PD4", "PD2", "PD0", "PC10", "PA14", "PA12", "PA10", "PA8", "PC8", "PC6"];
const topB = ["PC3", "PC1", "PE6", "PE4", "PE2", "PE0", "PB8", "PB6", "PB4", "PD7", "PD5", "PD3", "PD1", "PC11", "PA15", "PA13", "PA11", "PA9", "PC9", "PC7"];
const botA = ["PC13", "PA1", "PA3", "PA5", "PA7", "PC5", "PB1", "PE7", "PE9", "PE11", "PE13", "PE15", "PB11", "PB13", "PB15", "PD9", "PD11", "PD13", "PD15", "GND"];
const botB = ["PC12", "PA0", "PA2", "PA4", "PA6", "PC4", "PB0", "PB2", "PE8", "PE10", "PE12", "PE14", "PB10", "PB12", "PB14", "PD8", "PD10", "PD12", "PD14", "GND"];
const connector = (y, a, b, h1, h2, back) => {
  rect(802, y, 200, h1 + 20 + h2, back);
  for (let i = 0; i < 20; i++) {
    const x = 802.5 + i * 10;
    rect(x, y, 10, h1, "none", "#cccc00"); rect(x, y + h1 + 20, 10, h2, "none", "#cccc00");
    path(`M${x + 1} ${y}v${h1 + 20 + h2}`, RED, 1);
    pad(x + 5, y + h1 + 5); pad(x + 5, y + h1 + 15);
    label(x + 3, y + 1, a[i], 7, 90); label(x + 3, y + h1 + 21, b[i], 7, 90);
  }
  rect(802, y + h1, 200, 20, "none", YEL); rect(802, y, 200, h1 + 20 + h2, "none", YEL);
};
connector(320, topA, topB, 17, 17, "#300070");
connector(613.5, botA, botB, 18, 17, "#300070");
label(1003, 320, "P5", 6, 90); label(1004, 655, "P11", 6, 90); label(792, 320, "P12", 6, 90);
[[1006.5, 343.5, 31], [1016.5, 343.5, 31], [1006.5, 613.5, 31], [1016.5, 613.5, 31]].forEach(b => {
  rect(b[0], b[1], 10, b[2], NAVY, YEL); path(`M${b[0] + 5} ${b[1] + 5}v20`, RED, 4);
  [5, 15, 25].forEach(d => pad(b[0] + 5, b[1] + d));
});
label(1005, 342, "P16 P17", 6); label(1005, 651, "P18 P19", 6);
rect(735.5, 610.5, 40, 58, "none", YEL); path("M735 618.500H776M745.500 618V669M755.500 618V669M765.500 618V669", YEL);
for (let i = 0; i < 4; i++) for (let j = 0; j < 5; j++) pad(740 + i * 10, 623 + j * 10);
label(737, 617, "5V  GND 3V3", 6);
[0, 1].forEach(i => { rect(779.5 + i * 10, 613.5, 10, 55, NAVY, YEL); pad(784 + i * 10, 653); pad(784 + i * 10, 663); label(782 + i * 10, 612, ["3.3-5V_MCU", "VREF + -"][i], 6, 90); });

/* buttons and indicator parts */
["KEY_2", "KEY_1", "WKUP", "RESET"].forEach((t, i) => {
  const x = [582, 614, 645, 677][i];
  rect(x - 3, 627, 7, 32, RED, "#a00000"); rect(x - 6.5, 631.5, 13, 23, RED, YEL);
  add(`<circle cx="${x}" cy="643" r="5" fill="none" stroke="${YEL}"/>`); label(x + 9, 632, t, 7, 90);
});
[[541, 616], [554, 616], [541, 631], [554, 631]].forEach(p => rect(p[0], p[1], 7, 12, "#c00020", YEL));
label(549, 618, "LED1 R3", 6, 90); label(562, 618, "LED2 R4", 6, 90);
rect(702, 624, 18, 42, "#c0001c"); add(`<text transform="translate(708 628) rotate(90)" fill="${NAVY}" font-size="11" font-family="Noto Sans CJK SC, sans-serif">技小新</text>`);
add(`<text transform="translate(703 629) rotate(90)" fill="${NAVY}" font-size="6" font-family="Liberation Sans, sans-serif">jixin.pro</text>`);
label(723, 658, "P13", 6, 90); label(729, 658, "P14", 6, 90);

/* ruler strips lie over the canvas edges */
rect(301, 139, RIGHT, 21, "#f4f4f4"); rect(301, 139, 21, BOTTOM, "#f4f4f4");
for (let i = -24; X0 + i * STEP < RIGHT - 4; i++) {
  const x = X0 + i * STEP, big = i % 10 === 0;
  if (x < 326) continue;
  path(`M${x} 160v${big ? -17 : i % 5 === 0 ? -11 : -5}`, "#999");
  if (big) add(`<text class="ruler-label" x="${x + 2}" y="152">${i * 2}</text>`);
}
for (let i = -42; Y0 + i * STEP < BOTTOM; i++) {
  const y = Y0 + i * STEP, big = i % 10 === 0;
  if (y < 161) continue;
  path(`M322 ${y}h${big ? -17 : i % 5 === 0 ? -11 : -5}`, "#999");
  if (big) add(`<text class="ruler-label" transform="translate(306 ${y + 2}) rotate(90)">${-i * 2}</text>`);
}
path("M1048.500 143v17", "#0060c0", 1);

const g = document.createElementNS(NS, "g");
g.setAttribute("transform", "translate(-301 -139)");
g.innerHTML = out.join("");
board.appendChild(g);
```
